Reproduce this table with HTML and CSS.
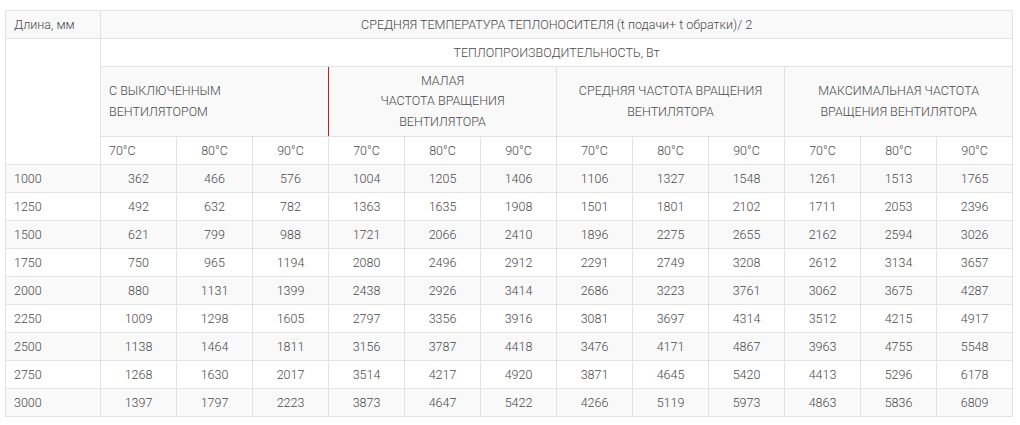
FILE: index.html
```html
<!DOCTYPE html>
<html lang="ru">
<head>
<meta charset="utf-8">
<title>Теплопроизводительность</title>
<link rel="stylesheet" href="styles.css">
</head>
<body>
<table class="heat">
  <colgroup>
    <col class="c-len">
    <col span="12" class="c-val">
  </colgroup>
  <tr class="row-gray">
    <td class="left">Длина, мм</td>
    <td colspan="12">СРЕДНЯЯ ТЕМПЕРАТУРА ТЕПЛОНОСИТЕЛЯ (t подачи+ t обратки)/ 2</td>
  </tr>
  <tr class="row-white">
    <td rowspan="3" class="blank"></td>
    <td colspan="12">ТЕПЛОПРОИЗВОДИТЕЛЬНОСТЬ, Вт</td>
  </tr>
  <tr class="row-gray row-group">
    <td colspan="3" class="left red-right">С ВЫКЛЮЧЕННЫМ<br>ВЕНТИЛЯТОРОМ</td>
    <td colspan="3" class="red-left">МАЛАЯ<br>ЧАСТОТА ВРАЩЕНИЯ<br>ВЕНТИЛЯТОРА</td>
    <td colspan="3">СРЕДНЯЯ ЧАСТОТА ВРАЩЕНИЯ<br>ВЕНТИЛЯТОРА</td>
    <td colspan="3">МАКСИМАЛЬНАЯ ЧАСТОТА<br>ВРАЩЕНИЯ ВЕНТИЛЯТОРА</td>
  </tr>
  <tr class="row-white">
    <td class="left">70°C</td><td>80°C</td><td>90°C</td>
    <td>70°C</td><td>80°C</td><td>90°C</td>
    <td>70°C</td><td>80°C</td><td>90°C</td>
    <td>70°C</td><td>80°C</td><td>90°C</td>
  </tr>
  <tr class="row-gray"><td class="left">1000</td><td>362</td><td>466</td><td>576</td><td>1004</td><td>1205</td><td>1406</td><td>1106</td><td>1327</td><td>1548</td><td>1261</td><td>1513</td><td>1765</td></tr>
  <tr class="row-white"><td class="left">1250</td><td>492</td><td>632</td><td>782</td><td>1363</td><td>1635</td><td>1908</td><td>1501</td><td>1801</td><td>2102</td><td>1711</td><td>2053</td><td>2396</td></tr>
  <tr class="row-gray"><td class="left">1500</td><td>621</td><td>799</td><td>988</td><td>1721</td><td>2066</td><td>2410</td><td>1896</td><td>2275</td><td>2655</td><td>2162</td><td>2594</td><td>3026</td></tr>
  <tr class="row-white"><td class="left">1750</td><td>750</td><td>965</td><td>1194</td><td>2080</td><td>2496</td><td>2912</td><td>2291</td><td>2749</td><td>3208</td><td>2612</td><td>3134</td><td>3657</td></tr>
  <tr class="row-gray"><td class="left">2000</td><td>880</td><td>1131</td><td>1399</td><td>2438</td><td>2926</td><td>3414</td><td>2686</td><td>3223</td><td>3761</td><td>3062</td><td>3675</td><td>4287</td></tr>
  <tr class="row-white"><td class="left">2250</td><td>1009</td><td>1298</td><td>1605</td><td>2797</td><td>3356</td><td>3916</td><td>3081</td><td>3697</td><td>4314</td><td>3512</td><td>4215</td><td>4917</td></tr>
  <tr class="row-gray"><td class="left">2500</td><td>1138</td><td>1464</td><td>1811</td><td>3156</td><td>3787</td><td>4418</td><td>3476</td><td>4171</td><td>4867</td><td>3963</td><td>4755</td><td>5548</td></tr>
  <tr class="row-white"><td class="left">2750</td><td>1268</td><td>1630</td><td>2017</td><td>3514</td><td>4217</td><td>4920</td><td>3871</td><td>4645</td><td>5420</td><td>4413</td><td>5296</td><td>6178</td></tr>
  <tr class="row-gray"><td class="left">3000</td><td>1397</td><td>1797</td><td>2223</td><td>3873</td><td>4647</td><td>5422</td><td>4266</td><td>5119</td><td>5973</td><td>4863</td><td>5836</td><td>6809</td></tr>
</table>
</body>
</html>
```
FILE: styles.css
```css
html, body {
  margin: 0;
  padding: 0;
  background: #ffffff;
}

body {
  padding: 10px 0 0 5px;
  font-family: Roboto, "Liberation Sans", sans-serif;
  font-size: 12.5px;
  font-weight: 300;
  color: #4a4a4a;
}

.heat {
  border-collapse: collapse;
  table-layout: fixed;
  width: 1007px;
}

.c-len { width: 95px; }
.c-val { width: 76px; }

.heat td {
  border: 1px solid #e2e2e2;
  padding: 0 8px;
  height: 27px;
  line-height: 20px;
  text-align: center;
  vertical-align: middle;
  white-space: nowrap;
}

.heat td.left {
  text-align: left;
}

.row-gray td {
  background: #f9f9f9;
}

.row-white td {
  background: #ffffff;
}

.heat td.blank {
  background: #ffffff;
}

.row-group td {
  height: 69px;
  line-height: 20.5px;
}

.heat td.red-left {
  border-left: 1px solid #e3101c;
}

.heat td.red-right {
  border-right: 1px solid #e3101c;
}
```
